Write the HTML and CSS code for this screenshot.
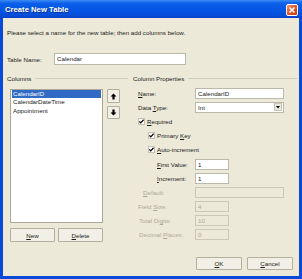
FILE: index.html
```html
<!DOCTYPE html>
<html>
<head>
  <title>Create New Table</title>
  <link rel="stylesheet" href="styles.css">
</head>
<body>
  <div class="window">
    <div class="titlebar">
      <span class="title">Create New Table</span>
      <span class="close-btn">
        <svg width="10" height="10" viewBox="0 0 10 10"><path d="M2.5 2.5 L7.5 7.5 M7.5 2.5 L2.5 7.5" stroke="#fff" stroke-width="1.6"/></svg>
      </span>
    </div>
    <div class="frame">
      <p class="intro">Please select a name for the new table; then add columns below.</p>

      <div class="name-row">
        <span class="name-label">Table Name:</span>
        <div class="textbox name-box">Calendar</div>
      </div>

      <div class="groups">
        <div class="group columns-group">
          <div class="group-title"><span>Columns</span></div>
          <div class="columns-body">
            <div class="listbox">
              <div class="item selected">CalendarID</div>
              <div class="item">CalendarDateTime</div>
              <div class="item">Appointment</div>
            </div>
            <div class="move-buttons">
              <button class="btn move-btn">
                <svg width="7" height="7" viewBox="0 0 7 7"><path d="M3.5 0.5 L6.5 3.5 H4.6 V6.5 H2.4 V3.5 H0.5 Z" fill="#000"/></svg>
              </button>
              <button class="btn move-btn">
                <svg width="7" height="7" viewBox="0 0 7 7"><path d="M3.5 6.5 L6.5 3.5 H4.6 V0.5 H2.4 V3.5 H0.5 Z" fill="#000"/></svg>
              </button>
            </div>
          </div>
          <div class="list-actions">
            <button class="btn"><u>N</u>ew</button>
            <button class="btn"><u>D</u>elete</button>
          </div>
        </div>

        <div class="group props-group">
          <div class="group-title"><span>Column Properties</span></div>
          <div class="props">
            <div class="prop-row">
              <span class="prop-label"><u>N</u>ame:</span>
              <div class="textbox wide">CalendarID</div>
            </div>
            <div class="prop-row">
              <span class="prop-label">Data <u>T</u>ype:</span>
              <div class="textbox wide select">
                <span>Int</span>
                <span class="drop-btn"><svg width="4" height="3" viewBox="0 0 4 3"><path d="M0 0 H4 L2 2.5 Z" fill="#000"/></svg></span>
              </div>
            </div>
            <div class="prop-row">
              <span class="checkbox"><svg width="5" height="5" viewBox="0 0 5 5"><path d="M0.4 2.4 L1.8 3.9 L4.6 0.8" stroke="#000" stroke-width="1.3" fill="none"/></svg></span>
              <span><u>R</u>equired</span>
            </div>
            <div class="prop-row indent-1">
              <span class="checkbox"><svg width="5" height="5" viewBox="0 0 5 5"><path d="M0.4 2.4 L1.8 3.9 L4.6 0.8" stroke="#000" stroke-width="1.3" fill="none"/></svg></span>
              <span>Primary <u>K</u>ey</span>
            </div>
            <div class="prop-row indent-1">
              <span class="checkbox"><svg width="5" height="5" viewBox="0 0 5 5"><path d="M0.4 2.4 L1.8 3.9 L4.6 0.8" stroke="#000" stroke-width="1.3" fill="none"/></svg></span>
              <span><u>A</u>uto-increment</span>
            </div>
            <div class="prop-row">
              <span class="prop-label indent-2"><u>F</u>irst Value:</span>
              <div class="textbox small">1</div>
            </div>
            <div class="prop-row">
              <span class="prop-label indent-2"><u>I</u>ncrement:</span>
              <div class="textbox small">1</div>
            </div>
            <div class="prop-row disabled">
              <span class="prop-label indent-3"><u>D</u>efault:</span>
              <div class="textbox wide"></div>
            </div>
            <div class="prop-row disabled">
              <span class="prop-label">Field <u>S</u>ize:</span>
              <div class="textbox small">4</div>
            </div>
            <div class="prop-row disabled">
              <span class="prop-label indent-4">Total Di<u>g</u>its:</span>
              <div class="textbox small">10</div>
            </div>
            <div class="prop-row disabled">
              <span class="prop-label indent-4">Decimal <u>P</u>laces:</span>
              <div class="textbox small">0</div>
            </div>
          </div>
        </div>
      </div>

      <div class="footer">
        <button class="btn footer-btn"><u>O</u>K</button>
        <button class="btn footer-btn"><u>C</u>ancel</button>
      </div>
    </div>
  </div>
</body>
</html>
```

FILE: styles.css
```css
* {
  box-sizing: border-box;
  margin: 0;
  padding: 0;
}

body {
  font-family: "Liberation Sans", Arial, sans-serif;
  font-size: 6.2px;
  color: #1a1a1a;
  background-color: #fff;
}

.window {
  width: 302px;
  height: 279px;
  display: flex;
  flex-direction: column;
}

.titlebar {
  height: 18px;
  display: flex;
  align-items: center;
  padding: 1px 4px 0 5px;
  background: linear-gradient(to bottom, #3d8bf7 0%, #0c5fe8 18%, #0456e4 55%, #054bd8 90%, #0a3fc4 100%);
}

.title {
  color: #fff;
  font-weight: bold;
  font-size: 7.7px;
  text-shadow: 1px 1px 0 #0b2f95;
}

.close-btn {
  margin-left: auto;
  width: 12px;
  height: 12px;
  display: flex;
  align-items: center;
  justify-content: center;
  border: 1px solid #fff;
  border-radius: 2px;
  background: linear-gradient(135deg, #f09a78 0%, #e1572c 45%, #c43d14 100%);
}

.frame {
  flex: 1;
  display: flex;
  flex-direction: column;
  border: 3px solid #0a4ad8;
  border-top: none;
  background-color: #ece9d8;
  padding: 10px 2px 0 4px;
}

.intro {
  line-height: 9px;
}

.name-row {
  display: flex;
  align-items: center;
  margin-top: 16px;
  height: 12px;
}

.name-label {
  width: 47px;
}

.textbox {
  height: 11px;
  background-color: #fff;
  border: 1px solid #bcb9aa;
  padding: 0 2px;
  line-height: 9px;
  white-space: nowrap;
}

.name-box {
  width: 132px;
  height: 12px;
  line-height: 10px;
}

.groups {
  display: flex;
  gap: 5px;
  margin-top: 9px;
}

.group-title {
  display: flex;
  align-items: center;
  height: 9px;
}

.group-title::after {
  content: "";
  flex: 1;
  margin-left: 4px;
  border-top: 1px solid #cfccbc;
}

.columns-group {
  width: 121px;
}

.props-group {
  width: 164px;
}

.columns-body {
  display: flex;
  margin-top: 6px;
  margin-left: 3px;
}

.listbox {
  width: 93px;
  height: 134px;
  background-color: #fff;
  border: 1px solid #aaa797;
  padding: 0 1px;
}

.item {
  height: 8.4px;
  line-height: 8.4px;
  padding-left: 1px;
  white-space: nowrap;
}

.item.selected {
  background-color: #316ac5;
  color: #fff;
}

.move-buttons {
  display: flex;
  flex-direction: column;
  gap: 3px;
  margin-left: 4px;
}

.btn {
  font-family: inherit;
  font-size: inherit;
  color: #1a1a1a;
  background-color: #f2f0e6;
  border: 1px solid #b2af9f;
  border-radius: 1px;
  display: flex;
  align-items: center;
  justify-content: center;
}

.move-btn {
  width: 13px;
  height: 14px;
}

.move-btn + .move-btn {
  height: 13px;
}

.list-actions {
  display: flex;
  gap: 3px;
  margin-top: 5px;
  margin-left: 3px;
}

.list-actions .btn {
  width: 45px;
  height: 14px;
}

.props {
  margin-top: 3px;
  margin-left: 5px;
}

.prop-row {
  display: flex;
  align-items: center;
  height: 14.2px;
  white-space: nowrap;
}

.prop-label {
  width: 57px;
}

.indent-1 {
  padding-left: 10px;
}

.prop-label.indent-2 {
  padding-left: 19px;
}

.prop-label.indent-3 {
  padding-left: 5px;
}

.prop-label.indent-4 {
  padding-left: 1px;
}

.textbox.wide {
  width: 89px;
}

.textbox.small {
  width: 34px;
}

.select {
  display: flex;
  align-items: center;
  padding-right: 1px;
}

.drop-btn {
  margin-left: auto;
  width: 8px;
  height: 8px;
  display: flex;
  align-items: center;
  justify-content: center;
  background-color: #ebe9df;
  border: 1px solid #c8c5b6;
}

.checkbox {
  width: 7px;
  height: 7px;
  margin-right: 2px;
  display: flex;
  align-items: center;
  justify-content: center;
  background-color: #fff;
  border: 1px solid #c4c1b2;
}

.disabled {
  color: #aca899;
}

.disabled .textbox {
  background-color: #ece9d8;
  border-color: #cbc8b9;
}

.footer {
  display: flex;
  justify-content: flex-end;
  gap: 5px;
  margin-top: 15px;
  padding-right: 4px;
}

.footer-btn {
  width: 46px;
  height: 13px;
}
```
